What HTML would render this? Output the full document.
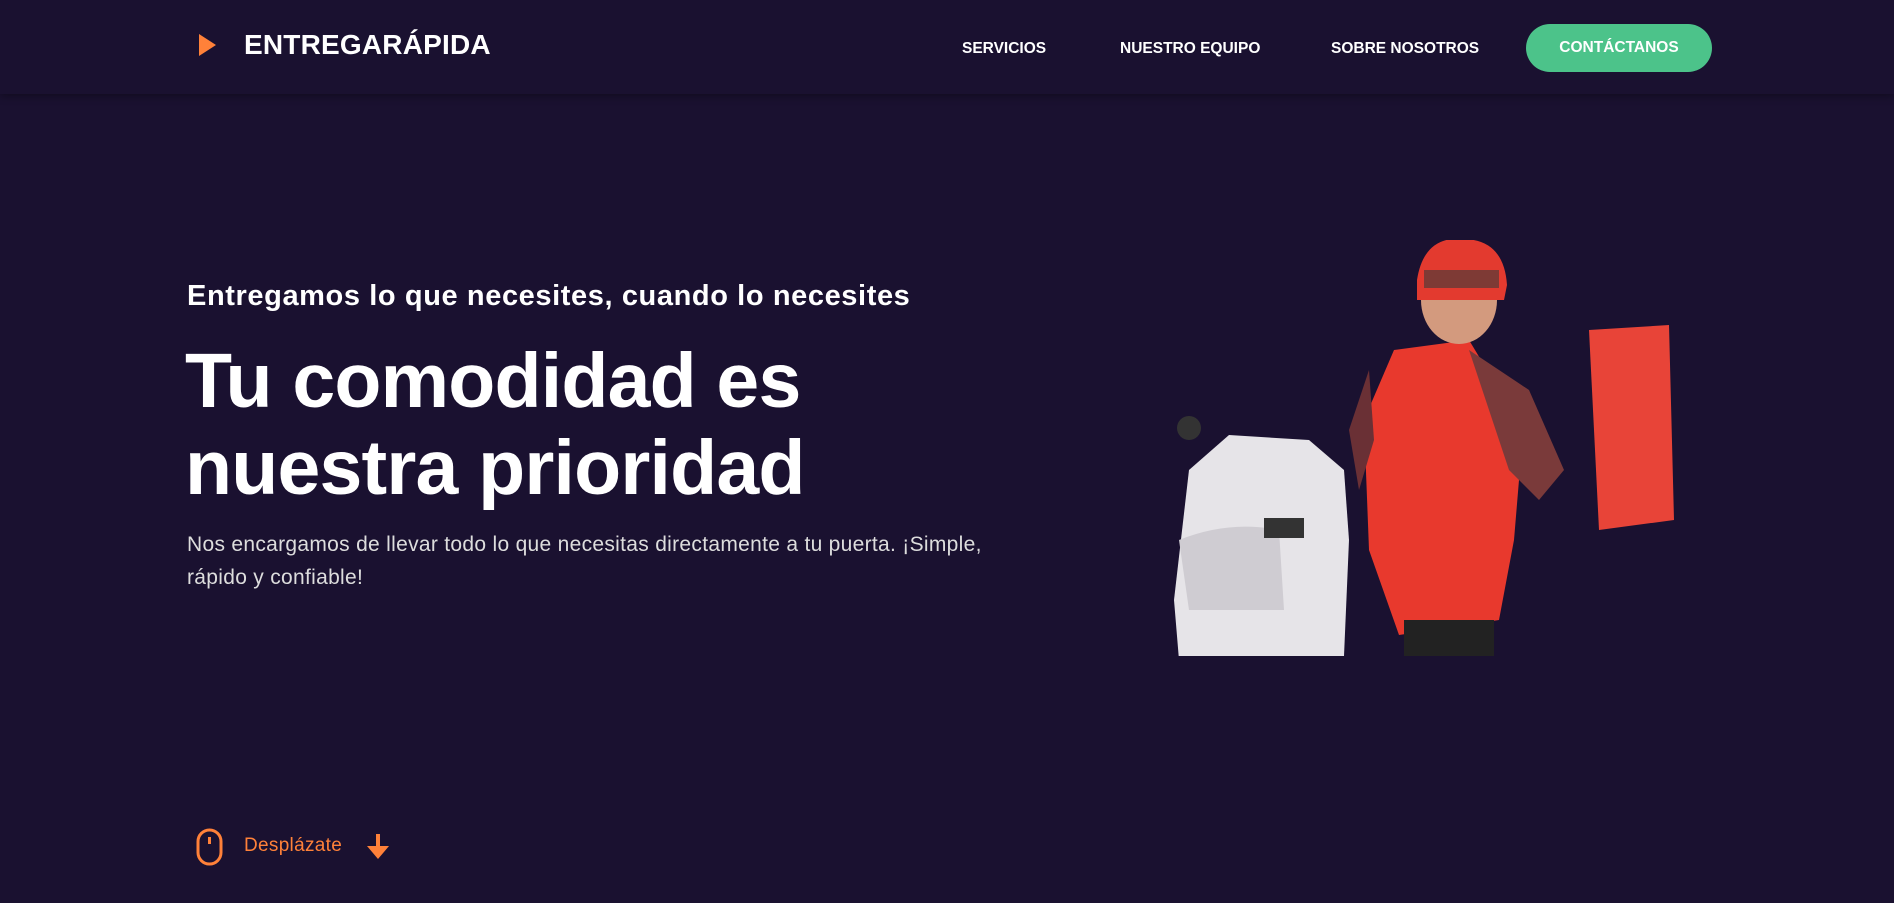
<!DOCTYPE html>
<html><head><meta charset="utf-8"><style>
*{margin:0;padding:0;box-sizing:border-box}
body{width:1894px;height:903px;background:#1a1130;font-family:"Liberation Sans",sans-serif;color:#fff;overflow:hidden;position:relative}
.hdr{position:absolute;left:0;top:0;width:1894px;height:94px;background:#1a1130;box-shadow:0 2px 8px rgba(0,0,0,.35)}
.logo{position:absolute;left:244px;top:29px;font-size:28px;font-weight:bold;letter-spacing:.2px}
.tri{position:absolute;left:199px;top:34px;width:0;height:0;border-left:17px solid #ff8139;border-top:11px solid transparent;border-bottom:11px solid transparent}
.nav{position:absolute;top:40px;font-size:15.5px;font-weight:bold}
.btn{position:absolute;left:1526px;top:24px;width:186px;height:48px;border-radius:24px;background:#4cc38a;font-size:15.5px;font-weight:bold;text-align:center;line-height:48px}
.sub{position:absolute;left:187px;top:280px;font-size:29px;font-weight:bold;letter-spacing:.6px}
h1{position:absolute;left:185px;top:338px;font-size:77px;line-height:87px;font-weight:bold;letter-spacing:-.8px}
.p{position:absolute;left:187px;top:528px;width:830px;font-size:21px;line-height:33px;color:#ddd;letter-spacing:.3px}
.scroll{position:absolute;left:244px;top:835px;font-size:19px;color:#ff8139;letter-spacing:.3px}
</style></head><body>
<div class="hdr">
<div class="tri"></div><div class="logo">ENTREGARÁPIDA</div>
<div class="nav" style="left:962px">SERVICIOS</div>
<div class="nav" style="left:1120px">NUESTRO EQUIPO</div>
<div class="nav" style="left:1331px">SOBRE NOSOTROS</div>
<div class="btn">CONTÁCTANOS</div>
</div>
<div class="sub">Entregamos lo que necesites, cuando lo necesites</div>
<h1>Tu comodidad es<br>nuestra prioridad</h1>
<div class="p">Nos encargamos de llevar todo lo que necesitas directamente a tu puerta. ¡Simple, rápido y confiable!</div>
<svg style="position:absolute;left:1169px;top:240px" width="510" height="416" viewBox="0 0 510 416">
<path d="M10 420 L5 360 L20 230 L60 195 L140 200 L175 230 L180 300 L175 416 Z" fill="#e6e4e8"/>
<path d="M10 300 Q60 280 110 290 L115 370 L20 370 Z" fill="#cfccd2"/>
<rect x="95" y="278" width="40" height="20" fill="#333"/>
<circle cx="20" cy="188" r="12" fill="#333"/>
<path d="M420 90 L500 85 L505 280 L430 290 Z" fill="#e84438"/>
<path d="M225 110 L300 100 L330 150 L350 240 L345 300 L330 380 L230 395 L200 310 L195 180 Z" fill="#e8392d"/>
<path d="M300 110 L360 150 L395 230 L370 260 L340 230 Z" fill="#7a3a3a"/>
<path d="M200 130 L180 190 L190 250 L205 200 Z" fill="#6a3035"/>
<ellipse cx="290" cy="60" rx="38" ry="44" fill="#d39a7e"/>
<path d="M248 40 Q255 -5 295 -1 Q335 0 338 45 L335 60 L248 60 Z" fill="#e33a2f"/>
<rect x="255" y="30" width="75" height="18" fill="#3a3a3a" opacity=".6"/>
<rect x="235" y="380" width="90" height="36" fill="#222"/>
</svg>
<svg style="position:absolute;left:196px;top:828px" width="28" height="38" viewBox="0 0 28 38"><rect x="2" y="2" width="23" height="34" rx="11.5" fill="none" stroke="#ff8139" stroke-width="3"/><rect x="12" y="9" width="3" height="7" fill="#ff8139"/></svg>
<div class="scroll">Desplázate</div>
<svg style="position:absolute;left:367px;top:834px" width="22" height="26" viewBox="0 0 22 26"><rect x="9" y="0" width="4" height="14" fill="#ff8139"/><path d="M0 12 L22 12 L11 25 Z" fill="#ff8139"/></svg>
</body></html>
